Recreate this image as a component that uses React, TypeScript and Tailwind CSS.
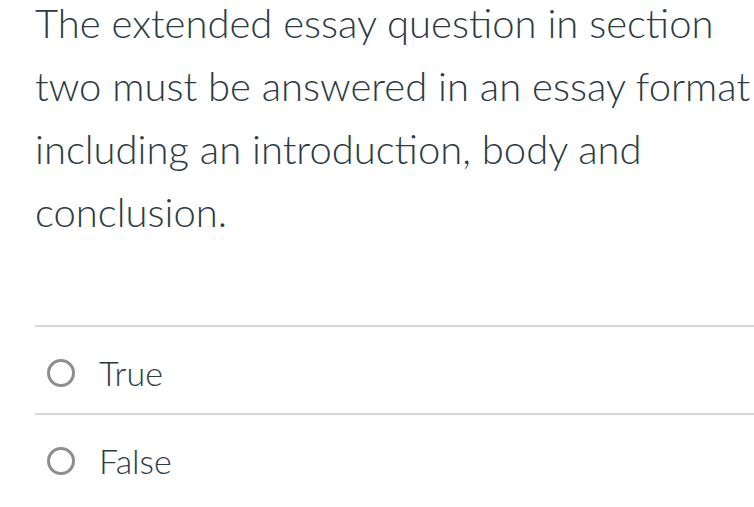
const lines = [
  'The extended essay question in section',
  'two must be answered in an essay format',
  'including an introduction, body and',
  'conclusion.',
];

const options = ['True', 'False'];

export default function App() {
  return (
    <div
      className="w-[754px] h-[507px] bg-white overflow-hidden text-[#2d3b45]"
      style={{ fontFamily: 'Lato, "Noto Sans", sans-serif' }}
    >
      <p className="pl-[35px] -mt-[8px] text-[40px] leading-[63px] font-light">
        {lines.map((l) => (
          <span key={l} className="block whitespace-nowrap">{l}</span>
        ))}
      </p>
      <div className="mt-[81px] ml-[35px]">
        {options.map((o) => (
          <div key={o} className="border-t-2 border-[#d6d9db] h-[88px] flex items-center gap-[24px] pl-[12px] pt-[6px]">
            <span className="w-[28px] h-[28px] rounded-full border-[3px] border-[#8e8e8e] shrink-0" />
            <span className="text-[34px] font-light leading-none">{o}</span>
          </div>
        ))}
      </div>
    </div>
  );
}
